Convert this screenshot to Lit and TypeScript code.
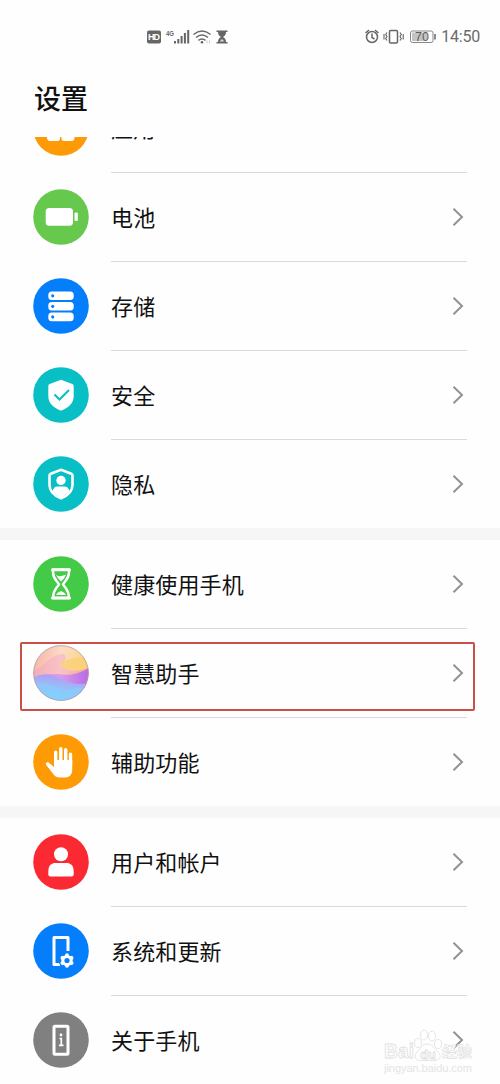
import { LitElement, html, css, svg } from "lit";
import { customElement, property } from "lit/decorators.js";

const glyphs: Record<string, unknown> = {
  apps: svg`<circle cx="28" cy="28" r="27.8" fill="#fd9a05"/>
    <path d="M14 14H27V38.5Q27 41 24.500 41H16.500Q14.500 41 14 38ZM28.500 14H41.500V38Q41 41 39 41H31Q28.500 41 28.500 38.500Z" fill="#fff"/>`,
  battery: svg`<circle cx="28" cy="28" r="27.8" fill="#67c84e"/>
    <rect x="12.700" y="19" width="27.300" height="17.700" rx="3.500" fill="#fff"/><rect x="41.500" y="23.500" width="3.300" height="8.500" rx="1" fill="#fff"/>`,
  storage: svg`<circle cx="28" cy="28" r="27.8" fill="#057efb"/>
    <g fill="#fff"><rect x="15.300" y="13.500" width="25.400" height="8.600" rx="3.500"/><rect x="15.300" y="24" width="25.400" height="8.600" rx="3.500"/><rect x="15.300" y="34.600" width="25.400" height="8.600" rx="3.500"/></g>
    <g fill="#057efb"><circle cx="19.700" cy="17.800" r="1.600"/><circle cx="19.700" cy="28.300" r="1.600"/><circle cx="19.700" cy="38.900" r="1.600"/></g>`,
  shield: svg`<circle cx="28" cy="28" r="27.8" fill="#08bfc6"/>
    <path d="M28 12.700 L39.300 17 Q40.700 17.600 40.700 19 V29 C40.700 36 36 40.500 28 43.700 C20 40.500 15.300 36 15.300 29 V19 Q15.300 17.600 16.700 17Z" fill="#fff"/>
    <path d="M21.500 27.500 L26.500 32.500 L36 23" fill="none" stroke="#08bfc6" stroke-width="2"/>`,
  privacy: svg`<circle cx="28" cy="28" r="27.8" fill="#08bfc6"/>
    <path d="M28 13.800 L38.300 17.800 Q39.500 18.300 39.500 19.500 V29 C39.500 35.500 35 39.500 28 42.300 C21 39.500 16.500 35.500 16.500 29 V19.500 Q16.500 18.300 17.700 17.800Z" fill="none" stroke="#fff" stroke-width="2.600"/>
    <circle cx="28" cy="24.500" r="4.700" fill="#fff"/><path d="M19.500 35.500Q20.500 30.500 24.500 30.500H31.500Q35.500 30.500 36.500 35.500L28 42Z" fill="#fff"/>`,
  hourglass: svg`<circle cx="28" cy="28" r="27.8" fill="#43ca46"/>
    <g fill="none" stroke="#fff" stroke-width="2.500" stroke-linejoin="round"><path d="M20 13.800H36V16C36 23 32.500 24 30 28.300C32.500 32.500 36 34 36 42H20C20 34 23.500 32.500 26 28.300C23.500 24 20 23 20 16Z"/><path d="M19.500 13.800H36.500M19.500 42H36.500" stroke-width="3" stroke-linecap="round"/></g>
    <path d="M23 19Q26 21.500 33 18.500Q32 22.500 28 25.500Q24.500 22.500 23 19ZM23 39Q24 36.500 28 35Q32 36.500 33 39Z" fill="#fff"/>`,
  assistant: svg`<defs>
      <linearGradient id="sky" x1="0" y1="0.300" x2="1" y2="0.500"><stop offset="0" stop-color="#f5b5a8"/><stop offset=".45" stop-color="#fbdcc4"/><stop offset="1" stop-color="#fad37c"/></linearGradient>
      <linearGradient id="rose" x1="0" x2="1"><stop offset="0" stop-color="#f3a9b8"/><stop offset=".5" stop-color="#f8bcc8"/><stop offset="1" stop-color="#f3a08f"/></linearGradient>
      <linearGradient id="violet" x1="0" x2="1"><stop offset="0" stop-color="#eb9fd0"/><stop offset=".5" stop-color="#d79bec"/><stop offset="1" stop-color="#b76ae4"/></linearGradient>
      <linearGradient id="sea" x1=".8" y1="0" x2=".5" y2="1"><stop offset="0" stop-color="#b594f2"/><stop offset=".5" stop-color="#99bbf8"/><stop offset="1" stop-color="#7dd3fc"/></linearGradient>
      <clipPath id="ball"><circle cx="28" cy="28" r="27.500"/></clipPath></defs>
    <g clip-path="url(#ball)"><path d="M0 0H56V56H0Z" fill="url(#sky)"/>
      <path d="M0 26C9 24 18 8 30 9C36 11 30 19 27 20C36 27 47 27 56 22V56H0Z" fill="url(#rose)" opacity=".8"/>
      <path d="M26 20Q34 11 56 12V21Q42 29 26 20Z" fill="#fbcf72" opacity=".8"/>
      <path d="M0 33C8 28 18 29 25 29C38 31 45 29 56 23V56H0Z" fill="url(#violet)"/>
      <path d="M0 33C9 28 18 29 26 33C36 39 45 40 56 38V56H0Z" fill="url(#sea)"/>
      <path d="M0 40C15 34 26 48 40 44Q49 41 56 44V56H0Z" fill="#82d4ff" opacity=".4"/></g>
    <circle cx="28" cy="28" r="27.400" fill="none" stroke="#b79aa6" stroke-width=".8"/>`,
  hand: svg`<circle cx="28" cy="28" r="27.8" fill="#fd9a05"/>
    <g fill="none" stroke="#fff" stroke-linecap="round" stroke-width="3.400"><path d="M22.700 29V18.200M27.800 28V14.700M32.700 28V15.700M37.500 32V20.200"/></g>
    <path d="M21 26H39.200V36C39.200 40.500 36.500 43.500 32 43.500H27C23.500 43.500 21.500 42 19.500 39L13.200 31C12 29 14.200 27.600 16 28.800L21 33Z" fill="#fff"/>`,
  user: svg`<circle cx="28" cy="28" r="27.8" fill="#fb2a32"/>
    <circle cx="28" cy="20.300" r="7" fill="#fff"/><path d="M15.300 38C15.300 31.500 18 29 23 29H33C38 29 40.700 31.500 40.700 38V40.500Q40.700 42.500 38.500 42.500H17.500Q15.300 42.500 15.300 40.500Z" fill="#fff"/>`,
  update: svg`<circle cx="28" cy="28" r="27.8" fill="#057efb"/>
    <path d="M35 28V14.500H21V41.500H27" fill="none" stroke="#fff" stroke-width="3" stroke-linejoin="round"/>
    <g transform="translate(34 37.500)"><circle r="8.300" fill="#057efb"/><g stroke="#fff" stroke-width="4" stroke-linecap="round"><path d="M0-5.200V5.200M-4.500-2.600L4.500 2.600M-4.500 2.600L4.500-2.600"/></g><circle r="5.600" fill="#fff"/><circle r="2.600" fill="#057efb"/></g>`,
  about: svg`<circle cx="28" cy="28" r="27.8" fill="#808080"/>
    <rect x="21" y="14.300" width="14" height="28" rx="1" fill="none" stroke="#fff" stroke-width="3"/>
    <circle cx="28" cy="23" r="1.400" fill="#fff"/><path d="M26.500 26.500H28.300V33M26 33.300H30.500" fill="none" stroke="#fff" stroke-width="1.700"/>`,
};

@customElement("setting-row")
class SettingRow extends LitElement {
  @property() icon = "";
  @property() label = "";

  static styles = css`
    :host { display: block; flex: none; padding: 0 33px 0 33px; }
    .row { display: grid; grid-template-columns: 56px 1fr; column-gap: 22px; height: 88px; align-items: start; }
    .icon { display: block; width: 56px; height: 56px; margin-top: 15.5px; }
    .body { display: flex; align-items: center; justify-content: space-between; height: 88px; padding-right: 3px; }
    .label { font-size: 22px; line-height: 32px; letter-spacing: 0.15px; color: #111; padding-bottom: 3px; }
    .arrow { width: 12px; height: 20px; }
    :host([divided]) .body { border-bottom: 1px solid #dadada; }
    :host([divided]) .row { height: 89px; }
  `;

  render() {
    return html`<div class="row">
      <svg class="icon" viewBox="0 0 56 56">${glyphs[this.icon]}</svg>
      <div class="body">
        <span class="label">${this.label}</span>
        <svg class="arrow" viewBox="0 0 12 20"><path d="M1.500 1.800L10 10L1.500 18.200" fill="none" stroke="#929292" stroke-width="2"/></svg>
      </div>
    </div>`;
  }
}

@customElement("status-bar")
class StatusBar extends LitElement {
  static styles = css`
    :host { display: flex; justify-content: space-between; align-items: center; height: 73px; padding: 0 20px 0 147px; box-sizing: border-box; color: #6b6b6b; }
    .side { display: flex; align-items: center; }
    .icons { display: block; height: 20px; }
    .time { font: 16px/20px Roboto, sans-serif; margin-left: 3px; letter-spacing: -0.2px; }
    .tiny { font: bold 8px "Liberation Sans", sans-serif; }
    .hd { font: bold 9px "Liberation Sans", sans-serif; }
    .level { font: 12.5px "Liberation Sans", sans-serif; }
  `;

  render() {
    return html`
      <div class="side">
        <svg class="icons" width="84" height="20" viewBox="0 0 84 20" fill="#666">
          <rect x="0" y="3.500" width="14" height="13" rx="2"/>
          <text class="hd" x="1" y="13.300" fill="#fff" textLength="12">HD</text>
          <text class="tiny" x="19" y="9" textLength="8" lengthAdjust="spacingAndGlyphs">4G</text>
          <path d="M27 14h2v2.500h-2zM30.300 12h2v4.500h-2zM33.600 9h2v7.500h-2zM36.900 6h2v10.500h-2zM40.200 3h2v13.500h-2z"/>
          <g fill="none" stroke="#666" stroke-width="1.500"><path d="M46.500 7.500Q55 .5 63.500 7.500M49 10.500Q55 5.500 61 10.500M51.500 13.400Q55 10.700 58.500 13.400"/></g>
          <circle cx="55" cy="15.300" r="1.300"/><path d="M60 13.500v3M62.500 13.500v3" stroke="#ccc"/>
          <path d="M69.500 3.500H80.500V5H79C79 8 77.500 9 76 10C77.500 11 79 12 79 15H80.500V16.500H69.500V15H71C71 12 72.500 11 74 10C72.500 9 71 8 71 5H69.500Z"/>
          <path d="M73 14.500Q73.500 13 75 12Q76.500 13 77 14.500Z" fill="#ddd"/>
        </svg>
      </div>
      <div class="side">
        <svg class="icons" width="73" height="20" viewBox="0 0 73 20" fill="none" stroke="#666" stroke-width="1.500">
          <circle cx="7" cy="10" r="5.500"/><path d="M7 6.500V10.500L9.500 12M.5 6L4 3M10 3L13.500 6"/>
          <rect x="24.500" y="3.500" width="8" height="12.500" rx="1.200"/><path d="M22 5.500l-1.300 2 1.300 2-1.300 2 1.300 2M35 5.500l1.300 2-1.300 2 1.300 2-1.300 2M19 7v5.500M38.200 7v5.500" stroke-width="1.100"/>
          <rect x="45.500" y="4" width="22.500" height="11.500" rx="2" stroke="#888" stroke-width="1"/><rect x="47" y="5.500" width="15" height="8.500" fill="#c4c4c4" stroke="none"/>
          <path d="M70 7v5.500"/><text class="level" x="50" y="14.300" fill="#5c5c5c" stroke="none" textLength="14">70</text>
        </svg>
        <span class="time">14:50</span>
      </div>`;
  }
}

@customElement("app-root")
class AppRoot extends LitElement {
  static styles = css`
    :host { display: flex; flex-direction: column; position: relative; width: 500px; height: 1084px; overflow: hidden; background: #fefefe; font-family: "Noto Sans CJK SC", sans-serif; }
    .title { flex: none; height: 64px; margin: 0; padding: 5px 34px 0; box-sizing: border-box; font-size: 27px; line-height: 40px; font-weight: 500; color: #111; }
    .list { display: flex; flex-direction: column; justify-content: flex-end; height: 947px; overflow: hidden; }
    .group { display: flex; flex-direction: column; }
    .gap { flex: none; height: 12px; background: #f6f6f6; }
    .highlight { position: absolute; left: 20px; top: 642px; width: 455px; height: 69px; box-sizing: border-box; border: 2px solid #c94f47; border-radius: 2px; }
    .mark { position: absolute; left: 380px; top: 1026px; width: 100px; height: 52px; }
    .brand { font: bold 20px "Liberation Sans", sans-serif; }
    .du { font: bold 13px "Liberation Sans", sans-serif; }
    .cn { font: bold 15px "Noto Sans CJK SC", sans-serif; }
    .site { font: 11px "Liberation Sans", sans-serif; }
  `;

  groups = [
    [["apps", "应用"], ["battery", "电池"], ["storage", "存储"], ["shield", "安全"], ["privacy", "隐私"]],
    [["hourglass", "健康使用手机"], ["assistant", "智慧助手"], ["hand", "辅助功能"]],
    [["user", "用户和帐户"], ["update", "系统和更新"], ["about", "关于手机"]],
  ];

  render() {
    return html`
      <status-bar></status-bar>
      <h1 class="title">设置</h1>
      <div class="list">
        ${this.groups.map((rows, g) => html`
          ${g ? html`<div class="gap"></div>` : ""}
          <div class="group">${rows.map(([icon, label], i) => html`<setting-row icon=${icon} label=${label} ?divided=${i < rows.length - 1}></setting-row>`)}</div>`)}
      </div>
      <div class="highlight"></div>
      <svg class="mark" viewBox="0 0 100 52" fill="#fff" stroke="#dedede" stroke-width=".8">
        <text class="brand" x="4" y="31.500" textLength="30" lengthAdjust="spacingAndGlyphs">Bai</text>
        <path d="M47 18C42 18 41 23 37 26C33 31 36 35 42 34.500H54C60 34.500 62 30 58 26C54 23 53 18 47 18Z"/>
        <ellipse cx="38" cy="17" rx="3.500" ry="4.500"/><ellipse cx="44" cy="9" rx="3.500" ry="5"/><ellipse cx="52" cy="10" rx="3.500" ry="5"/><ellipse cx="58" cy="18" rx="3.500" ry="4.500"/>
        <text class="du" x="40" y="32.500">du</text>
        <text class="cn" x="62" y="31" textLength="30" stroke-width=".6">经验</text>
        <text class="site" x="4" y="46" stroke="none" fill="#e4e4e4" textLength="88">jingyan.baidu.com</text>
      </svg>`;
  }
}
